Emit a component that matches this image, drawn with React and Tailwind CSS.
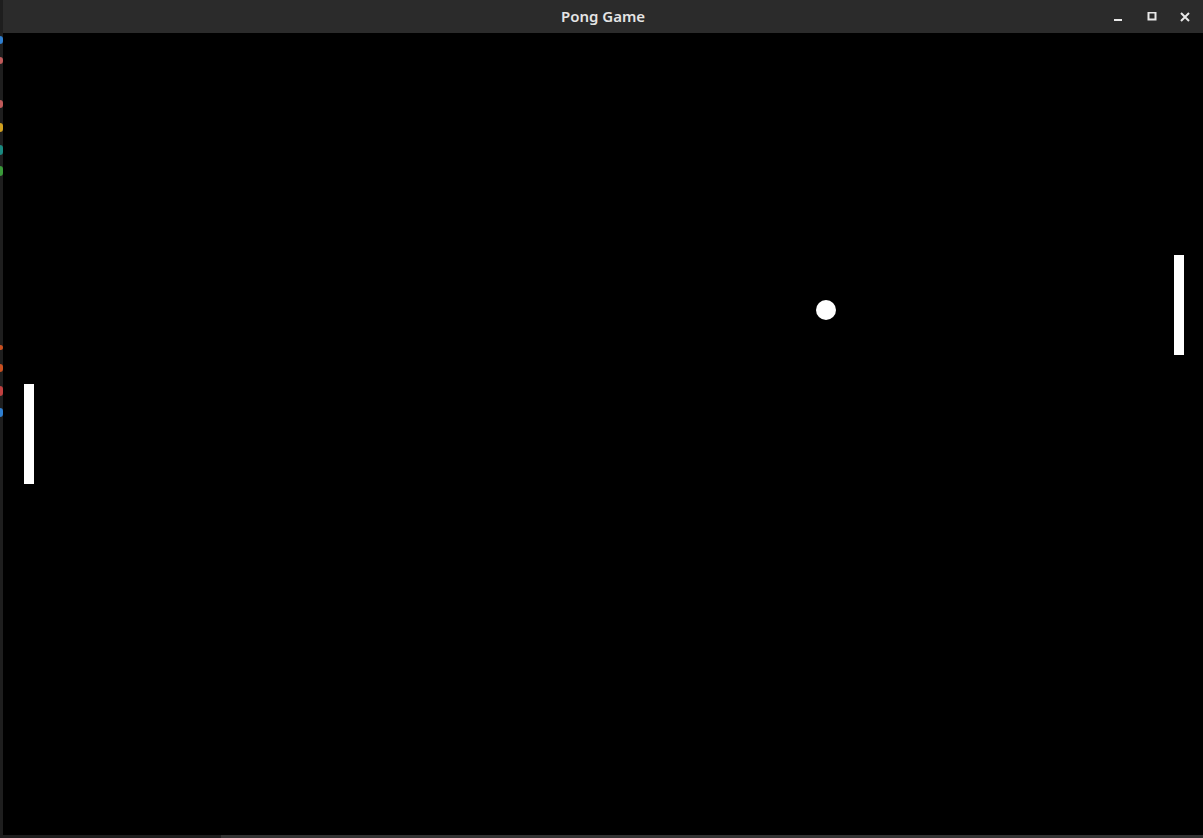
export default function App() {
    // bits of the desktop peeking out at the left edge
    const marks = [
        { top: 36, h: 8, color: 'bg-[#2f7fd0]' },
        { top: 57, h: 7, color: 'bg-[#c05a5a]' },
        { top: 100, h: 8, color: 'bg-[#c05a5a]' },
        { top: 123, h: 9, color: 'bg-[#d0a020]' },
        { top: 145, h: 10, color: 'bg-[#1a8a80]' },
        { top: 166, h: 10, color: 'bg-[#3a9a3a]' },
        { top: 345, h: 5, color: 'bg-[#c85020]' },
        { top: 364, h: 8, color: 'bg-[#c85020]' },
        { top: 386, h: 10, color: 'bg-[#c04040]' },
        { top: 408, h: 9, color: 'bg-[#2f7fd0]' },
    ]

    return (
        <div className="w-[1203px] h-[838px] flex flex-col bg-[#1e1e1e] overflow-hidden">
            <div className="flex flex-1 min-h-0">
                <div className="w-[3px] relative bg-[#1e1e1e]">
                    {marks.map((m) => (
                        <div
                            key={m.top}
                            className={`absolute left-0 w-[3px] rounded-r-sm ${m.color}`}
                            style={{ top: m.top, height: m.h }}
                        />
                    ))}
                </div>
                <div className="flex-1 flex flex-col">
                    <div className="h-[33px] bg-[#2b2b2b] relative flex items-center justify-center">
                        <span className="text-[15px] font-semibold text-[#e4e4e4] font-['Noto_Sans',sans-serif]">
                            Pong Game
                        </span>
                        <div className="absolute right-0 top-0 h-full flex items-center">
                            <div className="w-[34px] flex justify-center">
                                <svg width="10" height="10" viewBox="0 0 10 10">
                                    <rect x="1" y="7" width="8" height="2" fill="#e8e8e8" />
                                </svg>
                            </div>
                            <div className="w-[34px] flex justify-center">
                                <svg width="10" height="10" viewBox="0 0 10 10">
                                    <rect x="1.5" y="0.5" width="7" height="7" fill="none" stroke="#e8e8e8" strokeWidth="2" />
                                </svg>
                            </div>
                            <div className="w-[34px] flex justify-center pr-[2px]">
                                <svg width="10" height="10" viewBox="0 0 10 10">
                                    <path d="M1 1L9 9M9 1L1 9" stroke="#e8e8e8" strokeWidth="2" />
                                </svg>
                            </div>
                        </div>
                    </div>
                    <div className="flex-1 bg-black relative">
                        <div className="absolute left-[21px] top-[351px] w-[10px] h-[100px] bg-white" />
                        <div className="absolute left-[1171px] top-[222px] w-[10px] h-[100px] bg-white" />
                        <div className="absolute left-[813px] top-[267px] w-[20px] h-[20px] rounded-full bg-white" />
                    </div>
                </div>
            </div>
            <div className="h-[3px] flex">
                <div className="w-[221px] bg-[#1e1e1e]" />
                <div className="flex-1 bg-[#333333]" />
            </div>
        </div>
    )
}
